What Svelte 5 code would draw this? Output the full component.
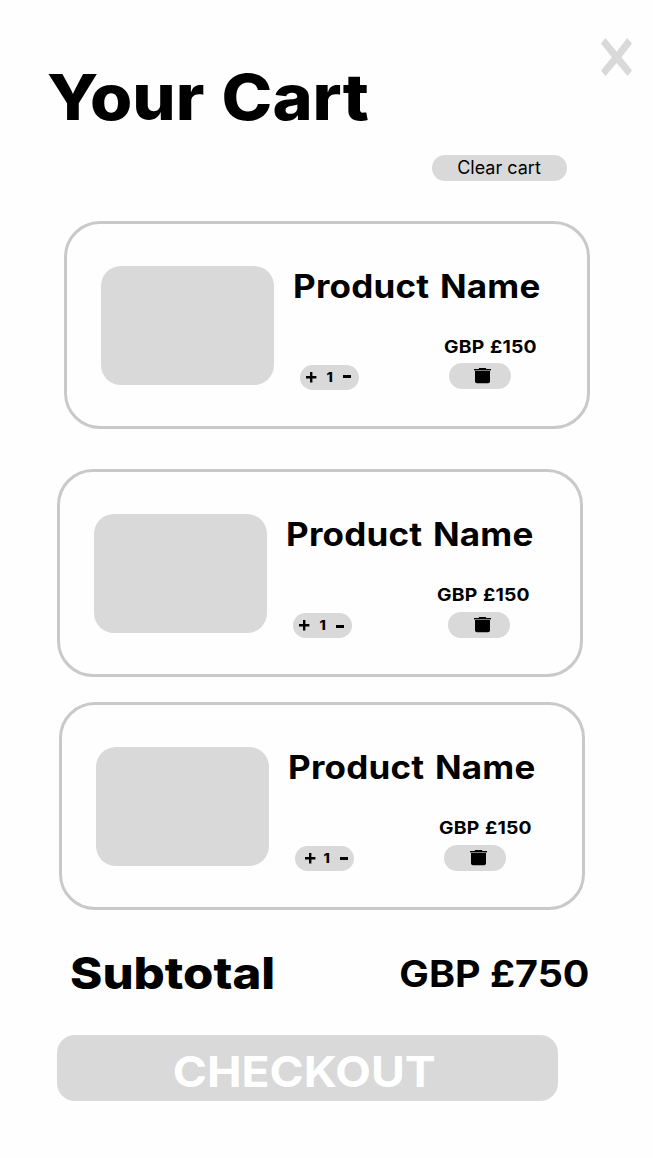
<script>
  const items = [
    { name: 'Product Name', price: 'GBP £150', qty: 1, left: 64, gap: 0, plus: 6, num: 10, minus: 8.8, minusY: 10, bin: 90, binY: 5, icon: 25 },
    { name: 'Product Name', price: 'GBP £150', qty: 1, left: 57, gap: 40, plus: 6, num: 10, minus: 8.8, minusY: 12, bin: 96, binY: 6, icon: 26 },
    { name: 'Product Name', price: 'GBP £150', qty: 1, left: 59, gap: 25, plus: 10, num: 8, minus: 9, minusY: 11, bin: 90, binY: 6, icon: 26 }
  ];
</script>

<main class="cart">
  <header>
    <h1>Your Cart</h1>
    <button class="close" aria-label="Close">
      <svg width="31" height="38" viewBox="0 0 91 113" preserveAspectRatio="none"><path d="M13 0L46 41L77 0L91 16L60 57L91 97L78 113L46 74L13 113L0 97L32 57L0 16Z" fill="#d9d9d9" /></svg>
    </button>
  </header>
  <button class="clear">Clear cart</button>

  <section class="items">
    {#each items as item}
      <article class="card" style="margin-left:{item.left}px;margin-top:{item.gap}px">
        <div class="thumb"></div>
        <div class="details">
          <h2>{item.name}</h2>
          <p class="price">{item.price}</p>
          <div class="controls">
            <div class="qty" style="padding-left:{item.plus}px">
              <svg class="plus" width="11" height="11" viewBox="0 0 11 11"><path d="M5.2 0V10.6M0 5.3H10.4" stroke="#000" stroke-width="2.4" /></svg>
              <span style="margin-left:{item.num}px">{item.qty}</span>
              <svg style="margin-left:{item.minus}px;margin-top:{item.minusY}px" width="8" height="3" viewBox="0 0 8 3"><path d="M0 0H8V3H0Z" /></svg>
            </div>
            <button class="bin" aria-label="Remove" style="margin-left:{item.bin}px;margin-top:{item.binY}px;padding-left:{item.icon}px">
              <svg width="17" height="16" viewBox="0 0 17 16"><path d="M5.2 0H11.8L12.4 .9H17V2.2H0V.9H4.6Z" /><path d="M0 2.2H17V3H0Z" fill="#777" /><path d="M1 3H16V13.2Q16 15.2 14 15.2H3Q1 15.2 1 13.2Z" /></svg>
            </button>
          </div>
        </div>
      </article>
    {/each}
  </section>

  <div class="subtotal"><strong>Subtotal</strong><span>GBP £750</span></div>
  <button class="checkout"><span>CHECKOUT</span></button>
</main>

<style>
  :global(body) { margin: 0; background: #fefefe; }
  .cart { box-sizing: border-box; width: 653px; height: 1158px; padding-top: 38px; display: flex; flex-direction: column; font-family: Inter, sans-serif; font-weight: 700; color: #000; overflow: hidden; }
  h1, h2, p { margin: 0; white-space: nowrap; transform-origin: left; }
  button { border: 0; padding: 0; font-family: inherit; color: inherit; display: flex; }
  svg { display: block; flex: none; }
  header { display: flex; justify-content: space-between; height: 117px; padding: 0 21px 0 47px; }
  h1 { margin-top: 18.5px; font-size: 63.3px; line-height: 80px; height: 80px; font-weight: 800; word-spacing: 2px; transform: scaleX(1.08); }
  .close { background: none; height: 38px; }
  .clear { width: 135px; height: 26px; margin-left: 432px; border-radius: 13px; background: #d9d9d9; align-items: center; justify-content: center; font-size: 18px; line-height: 24px; font-weight: 400; padding: 0 1px 1px 0; }
  .items { margin-top: 40px; }
  .card { box-sizing: border-box; width: 526px; height: 208px; border: 3px solid #c9c9c9; border-radius: 36px; padding: 42px 0 0 34px; display: flex; }
  .thumb { width: 173px; height: 119px; border-radius: 20px; background: #d9d9d9; flex: none; }
  .details { margin-left: 18px; width: 250px; }
  h2 { margin-left: 1.4px; width: 230px; font-size: 32px; line-height: 42px; font-weight: 700; letter-spacing: .2px; word-spacing: 2px; transform: scaleX(1.093); }
  .price { margin: 27px 0 0 152px; width: 90px; font-size: 17.5px; line-height: 24px; font-weight: 700; letter-spacing: .15px; word-spacing: .8px; transform: scaleX(1.105); }
  .controls { display: flex; align-items: flex-start; margin: -1px 0 0 8px; height: 34px; }
  .qty { box-sizing: border-box; width: 59px; height: 25px; margin-top: 7px; border-radius: 12.5px; background: #d9d9d9; display: flex; align-items: flex-start; font-size: 12.5px; line-height: 25px; font-weight: 800; }
  .qty span { width: 7px; transform: scaleX(1.15); }
  .plus { margin-top: 7px; }
  .bin { box-sizing: border-box; width: 62px; height: 26px; padding-top: 5px; border-radius: 13px; background: #d9d9d9; }
  .subtotal { display: flex; justify-content: space-between; margin: 33px 64px 0 69.5px; height: 60px; line-height: 60px; white-space: nowrap; }
  .subtotal strong { font-size: 44px; font-weight: 800; transform: scaleX(1.115); transform-origin: left; }
  .subtotal span { font-size: 36.2px; line-height: 62px; transform: scaleX(1.09); transform-origin: right; }
  .checkout { width: 501px; height: 66px; margin: 32px 0 0 57px; border-radius: 18px; background: #d9d9d9; color: #fff; font-size: 43px; line-height: 73px; font-weight: 700; justify-content: center; padding-right: 6px; }
  .checkout span { transform: scaleX(1.076); }
</style>
